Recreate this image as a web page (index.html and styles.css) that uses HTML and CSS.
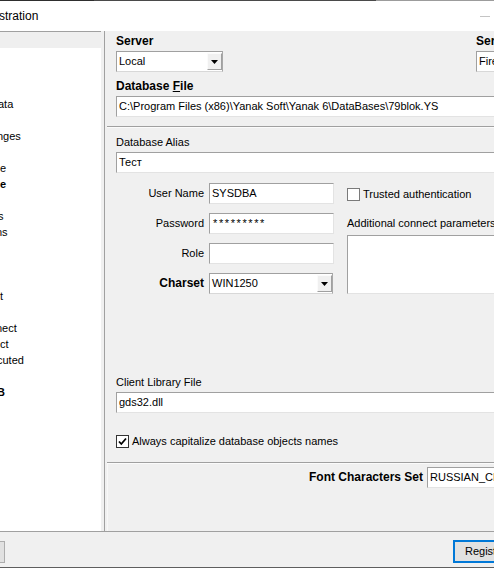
FILE: index.html
```html
<!DOCTYPE html>
<html>
<head>
<meta charset="utf-8">
<link rel="stylesheet" href="styles.css">
</head>
<body>
<div class="topline"></div>
<div class="titlebar">
  <span class="title">stration</span>
  <span class="min"></span>
</div>
<div class="main">
  <div class="tree">
    <div class="row sel"></div>
    <div class="row"></div>
    <div class="row"></div>
    <div class="row"></div>
    <div class="row i2">ata</div>
    <div class="row"></div>
    <div class="row i3">nges</div>
    <div class="row"></div>
    <div class="row">e</div>
    <div class="row b">e</div>
    <div class="row"></div>
    <div class="row i2">s</div>
    <div class="row i4">ns</div>
    <div class="row"></div>
    <div class="row"></div>
    <div class="row"></div>
    <div class="row">t</div>
    <div class="row"></div>
    <div class="row i4">nect</div>
    <div class="row">ct</div>
    <div class="row i3">cuted</div>
    <div class="row"></div>
    <div class="row b i3">B</div>
  </div>
  <div class="strip"></div>
  <div class="content">
    <section class="sec sec1">
      <div class="srv-row">
        <div class="srv-left">
          <div class="blabel">Server</div>
          <div class="select sel-local">
            <span class="val">Local</span>
            <span class="dd"><svg width="7" height="4" viewBox="0 0 7 4"><path d="M0 0H7L3.5 4Z" fill="#000"/></svg></span>
          </div>
        </div>
        <div class="srv-right">
          <div class="blabel">Server</div>
          <div class="select sel-type">
            <span class="val">Firebird</span>
          </div>
        </div>
      </div>
      <div class="blabel dbf">Database <u>F</u>ile</div>
      <div class="edit wide dbf-edit">C:\Program Files (x86)\Yanak Soft\Yanak 6\DataBases\79blok.YS</div>
    </section>
    <section class="sec sec2">
      <div class="label">Database Alias</div>
      <div class="edit wide alias-edit">Тест</div>
      <div class="creds">
        <div class="cgrid">
          <div class="glabel">User Name</div>
          <div class="edit">SYSDBA</div>
          <div class="glabel">Password</div>
          <div class="edit pwd">*********</div>
          <div class="glabel">Role</div>
          <div class="edit"></div>
          <div class="glabel bold">Charset</div>
          <div class="select sel-cs">
            <span class="val">WIN1250</span>
            <span class="dd"><svg width="7" height="4" viewBox="0 0 7 4"><path d="M0 0H7L3.5 4Z" fill="#000"/></svg></span>
          </div>
        </div>
        <div class="cright">
          <div class="chk-row">
            <span class="chk"></span>
            <span>Trusted authentication</span>
          </div>
          <div class="addl">Additional connect parameters</div>
          <div class="memo"></div>
        </div>
      </div>
      <div class="label client">Client Library File</div>
      <div class="edit wide client-edit">gds32.dll</div>
      <div class="chk-row caps">
        <span class="chk on"><svg width="11" height="11" viewBox="0 0 11 11"><path d="M2 5.5L4.3 8L9 2.5" fill="none" stroke="#000" stroke-width="1.8"/></svg></span>
        <span>Always capitalize database objects names</span>
      </div>
    </section>
    <section class="sec sec3">
      <div class="fcs-row">
        <div class="glabel bold fcs-label">Font Characters Set</div>
        <div class="edit fcs-edit">RUSSIAN_CHARSET</div>
      </div>
    </section>
  </div>
</div>
<div class="footer">
  <div class="stub"></div>
  <div class="btn">Register</div>
</div>
</body>
</html>
```

FILE: styles.css
```css
html, body {
  margin: 0;
  padding: 0;
}
body {
  width: 494px;
  height: 568px;
  overflow: hidden;
  background: #f0f0f0;
  font-family: "Liberation Sans", Arial, sans-serif;
  font-size: 11px;
  color: #000;
}
.topline {
  height: 1px;
  background: linear-gradient(to right, #2e2e2e 0 94px, #4a4a4a 94px 376px, #9c9c9c 376px);
}
.titlebar {
  height: 30px;
  background: #fff;
  display: flex;
  align-items: center;
  justify-content: space-between;
}
.title {
  font-size: 12px;
  line-height: 30px;
  margin-left: -1px;
}
.min {
  width: 10px;
  height: 1px;
  background: #c4c4c4;
  margin-right: 4px;
}
.main {
  height: 500px;
  display: flex;
}
.tree {
  width: 101px;
  flex: none;
  background: #fff;
  border-top: 1px solid #a0a0a0;
  box-sizing: border-box;
  overflow: hidden;
}
.row {
  height: 16px;
  line-height: 16px;
  white-space: nowrap;
}
.row.sel { background: #efefef; }
.row.b { font-weight: bold; }
.i2 { text-indent: -2px; }
.i3 { text-indent: -3px; }
.i4 { text-indent: -4px; }
.strip {
  width: 3px;
  flex: none;
}
.content {
  flex: 1;
  min-width: 0;
  border-left: 1px solid #a0a0a0;
  padding-left: 2px;
  display: flex;
  flex-direction: column;
  overflow: hidden;
}
.sec {
  box-sizing: border-box;
  padding-left: 9px;
  overflow: hidden;
  flex: none;
}
.sec1 {
  height: 95px;
  padding-top: 3px;
}
.sec2 {
  height: 336px;
  border-top: 1px solid #a0a0a0;
  box-shadow: inset 0 1px #fbfbfb;
  padding-top: 8px;
}
.sec3 {
  height: 69px;
  border-top: 1px solid #a0a0a0;
  box-shadow: inset 0 1px #fbfbfb, inset 1px 0 #f8f8f8;
  padding-top: 4px;
}
.blabel {
  font-weight: bold;
  font-size: 12px;
  line-height: 15px;
  white-space: nowrap;
}
.label {
  line-height: 14px;
  white-space: nowrap;
}
.srv-row {
  display: flex;
}
.srv-left {
  width: 360px;
  flex: none;
}
.srv-right {
  flex: none;
  width: 120px;
}
.edit, .select, .memo {
  box-sizing: border-box;
  height: 21px;
  background: #fff;
  border: 1px solid;
  border-color: #a0a0a0 #e3e3e3 #e3e3e3 #a0a0a0;
  line-height: 19px;
  padding-left: 2px;
  white-space: nowrap;
  overflow: hidden;
}
.select {
  display: flex;
  margin-top: 2px;
  border-color: #a0a0a0 #a8a8a8 #d8d8d8 #a0a0a0;
}
.select .val {
  flex: 1;
  min-width: 0;
  padding-left: 0;
}
.sel-local { width: 107px; }
.sel-type { width: 110px; }
.sel-cs { width: 124px; margin-top: 0; }
.dd {
  flex: none;
  width: 15px;
  height: 17px;
  margin: 1px 0;
  box-sizing: border-box;
  background: #f0f0f0;
  border: 1px solid;
  border-color: #fbfbfb #a0a0a0 #a0a0a0 #fbfbfb;
  display: flex;
  align-items: center;
  justify-content: center;
}
.dd svg { display: block; }
.wide { width: 420px; }
.dbf { margin-top: 7px; }
.dbf-edit { margin-top: 2px; }
.alias-edit { margin-top: 3px; }
.creds {
  display: flex;
  margin-top: 10px;
}
.cgrid {
  display: grid;
  grid-template-columns: 88px 125px;
  grid-auto-rows: 21px;
  column-gap: 5px;
  row-gap: 9px;
  flex: none;
}
.glabel {
  text-align: right;
  line-height: 21px;
  white-space: nowrap;
}
.bold {
  font-weight: bold;
  font-size: 12px;
}
.pwd {
  font-size: 11px;
  letter-spacing: 1.6px;
  padding-left: 3px;
}
.cright {
  margin-left: 13px;
  flex: none;
  width: 200px;
}
.chk-row {
  height: 21px;
  display: flex;
  align-items: center;
  gap: 3px;
  white-space: nowrap;
}
.chk {
  width: 13px;
  height: 13px;
  box-sizing: border-box;
  border: 1px solid #7a7a7a;
  background: #fff;
  flex: none;
  margin-top: 1px;
  display: flex;
  align-items: center;
  justify-content: center;
}
.chk.on { border-color: #333; }
.chk svg { display: block; }
.addl {
  margin-top: 9px;
  line-height: 21px;
  white-space: nowrap;
}
.memo {
  margin-top: 1px;
  height: 59px;
  width: 200px;
}
.client { margin-top: 81px; }
.client-edit { margin-top: 3px; }
.caps { margin-top: 17px; }
.fcs-row {
  display: flex;
  gap: 4px;
}
.fcs-label {
  width: 307px;
  flex: none;
}
.fcs-edit {
  flex: none;
  width: 120px;
}
.footer {
  height: 37px;
  box-sizing: border-box;
  border-top: 1px solid #a0a0a0;
  border-bottom: 1px solid #5e5e5e;
  display: flex;
  align-items: flex-start;
  padding-top: 8px;
  overflow: hidden;
}
.stub {
  flex: none;
  width: 5px;
  height: 22px;
  margin-top: 1px;
  box-sizing: border-box;
  background: #e1e1e1;
  border: 1px solid #adadad;
  border-left: none;
}
.btn {
  flex: none;
  margin-left: 448px;
  width: 68px;
  height: 23px;
  box-sizing: border-box;
  border: 2px solid #0078d7;
  background: #e1e1e1;
  line-height: 19px;
  padding-left: 10px;
  white-space: nowrap;
}
```
